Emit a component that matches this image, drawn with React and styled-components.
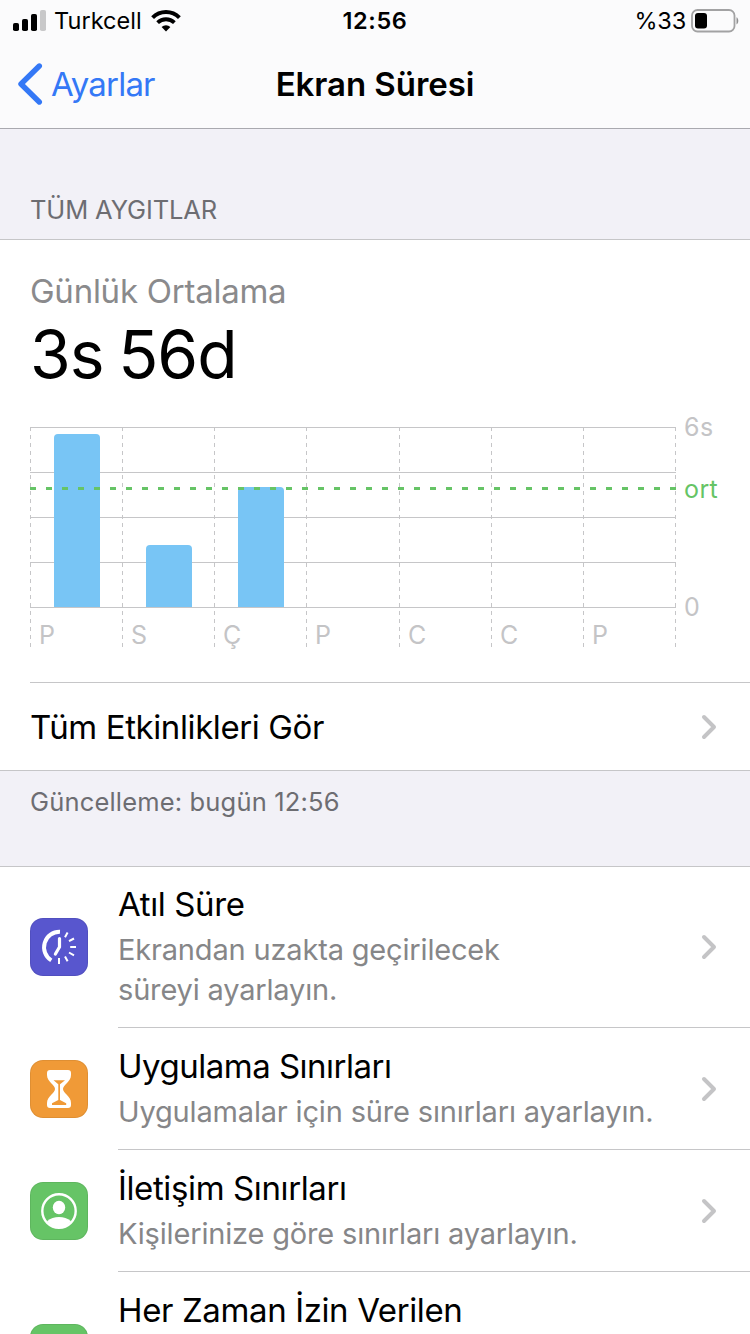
import React from 'react';
import styled, { createGlobalStyle } from 'styled-components';

const GlobalStyle = createGlobalStyle`
  * {
    box-sizing: border-box;
  }
  body {
    margin: 0;
    background-color: #f2f1f7;
    font-family: Inter, 'Liberation Sans', sans-serif;
    color: #000;
  }
`;

const Screen = styled.div`
  display: flex;
  flex-direction: column;
  width: 750px;
  height: 1334px;
  overflow: hidden;
  background-color: #f2f1f7;
  white-space: nowrap;
`;

const Header = styled.header`
  flex: none;
  height: 129px;
  background-color: #fbfbfc;
  border-bottom: 1px solid #a9a9af;
`;

const StatusBar = styled.div`
  display: grid;
  grid-template-columns: 1fr auto 1fr;
  align-items: center;
  height: 40px;
  padding: 0 11px 0 13px;
  font-size: 23.5px;
  line-height: 40px;
`;

const StatusGroup = styled.div`
  display: flex;
  align-items: center;
  justify-content: ${(props) => (props.$end ? 'flex-end' : 'flex-start')};
`;

const Carrier = styled.span`
  margin: 1px 9px 0 8px;
  letter-spacing: 0.05px;
`;

const Clock = styled.span`
  padding: 1px 2px 0 0;
  font-weight: 600;
  letter-spacing: 0.6px;
`;

const BatteryText = styled.span`
  margin: 1px 5px 0 0;
  letter-spacing: -0.2px;
`;

const NavBar = styled.nav`
  display: grid;
  grid-template-columns: 1fr auto 1fr;
  align-items: center;
  height: 88px;
  padding: 0 17px;
  font-size: 33px;
  line-height: 88px;
`;

const BackButton = styled.a`
  display: flex;
  align-items: center;
  gap: 8px;
  color: #3478f6;
  letter-spacing: -0.8px;
`;

const Title = styled.span`
  font-weight: 600;
  letter-spacing: -0.05px;
`;

const SectionLabel = styled.div`
  flex: none;
  height: 110px;
  padding: 61px 30px 0;
  font-size: 25.5px;
  line-height: 40px;
  letter-spacing: -0.13px;
  color: #6d6d72;
`;

const Card = styled.section`
  flex: none;
  background-color: #fff;
  border-top: 1px solid #c6c6c8;
  border-bottom: 1px solid #c6c6c8;
`;

const Summary = styled.div`
  height: 187px;
  padding: 31px 30px 0;
`;

const SummaryLabel = styled.div`
  font-size: 33px;
  line-height: 40px;
  letter-spacing: -0.25px;
  color: #8a8a8c;
`;

const SummaryValue = styled.div`
  font-size: 66px;
  line-height: 86px;
  letter-spacing: -1px;
  word-spacing: -3px;
`;

const ChartSvg = styled.svg`
  display: block;
  overflow: visible;
`;

const ChartLabel = styled.text`
  font-size: 25px;
  letter-spacing: 0.4px;
  fill: ${(props) => props.$color || '#c4c4c6'};
`;

const LinkRow = styled.div`
  display: flex;
  align-items: center;
  justify-content: space-between;
  height: 88px;
  margin-left: 30px;
  padding-right: 33px;
  border-top: 1px solid #c6c6c8;
  font-size: 33px;
  letter-spacing: -0.4px;
`;

const Footnote = styled.div`
  flex: none;
  height: 95px;
  padding: 11px 30px 0;
  font-size: 25.5px;
  line-height: 40px;
  letter-spacing: 0.17px;
  color: #6d6d72;
`;

const Item = styled.div`
  display: flex;
  align-items: center;
  height: ${(props) => props.$height}px;
  padding-left: 30px;
`;

const ItemIcon = styled.div`
  flex: none;
  width: 58px;
  height: 58px;
  margin: 0 30px ${(props) => props.$lift || 0}px 0;
  border-radius: 13px;
  background-color: ${(props) => props.$color};
  box-shadow: inset 0 0 0 1px rgba(0, 0, 0, 0.07);
`;

const ItemBody = styled.div`
  flex: 1;
  display: flex;
  align-items: center;
  justify-content: space-between;
  height: 100%;
  padding-right: 33px;
  border-bottom: 1px solid #c6c6c8;
`;

const ItemText = styled.div`
  align-self: flex-start;
  padding-top: ${(props) => 15 - (props.$lift || 0)}px;
`;

const ItemTitle = styled.div`
  font-size: 33px;
  line-height: 46px;
  letter-spacing: ${(props) => props.$spacing || -0.38}px;
`;

const ItemDescription = styled.div`
  margin-top: 3px;
  font-size: 29px;
  line-height: 40px;
  letter-spacing: -0.17px;
  color: #868688;
  white-space: pre-line;
`;

const Chevron = () => (
  <svg width="16" height="26" viewBox="0 0 16 26" fill="none">
    <path d="M3 3l10 10L3 23" stroke="#c4c4c6" strokeWidth="4" strokeLinecap="round" strokeLinejoin="round" />
  </svg>
);

const BackArrow = () => (
  <svg width="26" height="44" viewBox="0 0 26 44" fill="none">
    <path d="M22.3 4L4 22l18.3 18" stroke="#3478f6" strokeWidth="5.4" strokeLinecap="round" strokeLinejoin="round" />
  </svg>
);

const Signal = () => (
  <svg width="33" height="21" viewBox="0 0 33 21">
    <rect x="0" y="13" width="6" height="8" rx="1.8" />
    <rect x="9" y="9" width="6" height="12" rx="1.8" />
    <rect x="18" y="4" width="6" height="17" rx="1.8" />
    <rect x="27" y="0" width="6" height="21" rx="1.8" fill="#c8c8c9" />
  </svg>
);

const Wifi = () => (
  <svg width="30" height="22" viewBox="0 0 30 22" fill="none" stroke="#000">
    <path d="M1.6 7.6A19 19 0 0 1 28.4 7.6" strokeWidth="4" />
    <path d="M6.6 12.7A12 12 0 0 1 23.4 12.7" strokeWidth="3.8" />
    <path d="M15 21.5l-4.4-4.4a6.4 6.4 0 0 1 8.8 0z" fill="#000" stroke="none" />
  </svg>
);

const Battery = () => (
  <svg width="48" height="24" viewBox="0 0 48 24">
    <rect x="1" y="1" width="42.5" height="21.5" rx="5.5" fill="none" stroke="#a2a2a3" strokeWidth="1.8" />
    <rect x="4" y="4" width="12" height="15.5" rx="3" />
    <path d="M45.5 8.2c2.4 1.2 2.4 6 0 7.2z" fill="#8f8f90" />
  </svg>
);

const DowntimeIcon = () => (
  <svg width="58" height="58" viewBox="0 0 58 58" fill="none" stroke="#fff">
    <path d="M30 13.8A15.5 15.5 0 0 0 21.3 42.4" strokeWidth="4" />
    <path d="M29.5 20.500v8.500L25.4 36" strokeWidth="3.2" strokeLinecap="round" strokeLinejoin="round" />
    <path
      d="M35 19.3l2.6-4.7M39 23.2l5-2.7M40.2 29H46M39 34.5l5 2.8M35 38.6l2.6 4.7M29 40v6"
      strokeWidth="2"
    />
  </svg>
);

const HourglassIcon = () => (
  <svg width="58" height="58" viewBox="0 0 58 58">
    <path
      fill="#fff"
      d="M20 10h18q3 0 3 3v2c0 7-8 9.500-8 14s8 7 8 14v2q0 3-3 3H20q-3 0-3-3v-2c0-7 8-9.500 8-14s-8-7-8-14v-2q0-3 3-3z"
    />
    <path fill="#f09a37" d="M23.500 20.300h11.500l-5 4v15.700l6.200 3.200v1.800H22v-1.800l6.300-3.200V24.300z" />
  </svg>
);

const PersonIcon = () => (
  <svg width="58" height="58" viewBox="0 0 58 58">
    <circle cx="29" cy="29" r="16.7" fill="none" stroke="#fff" strokeWidth="2.4" />
    <ellipse cx="29" cy="25.500" rx="6.200" ry="6.700" fill="#fff" />
    <path fill="#fff" d="M17 39.200c3.500-3 7.500-4.200 12-4.200s8.500 1.200 12 4.200c-3 4.200-7 6.500-12 6.500s-9-2.300-12-6.500z" />
  </svg>
);

const columns = [30, 122, 214, 306, 399, 491, 583, 675];
const days = ['P', 'S', 'Ç', 'P', 'C', 'C', 'P'];
const bars = [173, 62, 120];

const roundedBar = (x, h) =>
  `M${x} 180v-${h - 4}q0-4 4-4h38q4 0 4 4v${h - 4}z`;

const UsageChart = () => (
  <ChartSvg width="750" height="255" viewBox="0 0 750 255">
    {[0, 45, 90, 135, 180].map((y) => (
      <rect key={y} x="30" y={y} width="646" height="1" fill="#c6c6c8" />
    ))}
    {columns.map((x) => (
      <path key={x} d={`M${x + 0.5} 0V220`} stroke="#c6c6c8" strokeDasharray="4 4" />
    ))}
    {bars.map((h, i) => (
      <path key={i} d={roundedBar(columns[i] + 24, h)} fill="#78c5f5" />
    ))}
    <path d="M30 61.5H676" stroke="#66c466" strokeWidth="3" strokeDasharray="6 10" />
    {days.map((day, i) => (
      <ChartLabel key={i} x={columns[i] + 9} y="217">{day}</ChartLabel>
    ))}
    <ChartLabel x="684" y="9">6s</ChartLabel>
    <ChartLabel x="684" y="71" $color="#66c466">ort</ChartLabel>
    <ChartLabel x="684" y="189">0</ChartLabel>
  </ChartSvg>
);

const items = [
  {
    title: 'Atıl Süre',
    description: 'Ekrandan uzakta geçirilecek\nsüreyi ayarlayın.',
    color: '#5856ce',
    icon: <DowntimeIcon />,
    height: 161,
    lift: 1,
  },
  {
    title: 'Uygulama Sınırları',
    description: 'Uygulamalar için süre sınırları ayarlayın.',
    color: '#f09a37',
    icon: <HourglassIcon />,
    height: 122,
    spacing: -0.5,
  },
  {
    title: 'İletişim Sınırları',
    description: 'Kişilerinize göre sınırları ayarlayın.',
    color: '#66c466',
    icon: <PersonIcon />,
    height: 122,
  },
  {
    title: 'Her Zaman İzin Verilen',
    color: '#66c466',
    height: 162,
  },
];

const App = () => {
  return (
    <Screen>
      <GlobalStyle />
      <Header>
        <StatusBar>
          <StatusGroup>
            <Signal />
            <Carrier>Turkcell</Carrier>
            <Wifi />
          </StatusGroup>
          <Clock>12:56</Clock>
          <StatusGroup $end>
            <BatteryText>%33</BatteryText>
            <Battery />
          </StatusGroup>
        </StatusBar>
        <NavBar>
          <BackButton>
            <BackArrow />
            Ayarlar
          </BackButton>
          <Title>Ekran Süresi</Title>
        </NavBar>
      </Header>
      <SectionLabel>TÜM AYGITLAR</SectionLabel>
      <Card>
        <Summary>
          <SummaryLabel>Günlük Ortalama</SummaryLabel>
          <SummaryValue>3s 56d</SummaryValue>
        </Summary>
        <UsageChart />
        <LinkRow>
          Tüm Etkinlikleri Gör
          <Chevron />
        </LinkRow>
      </Card>
      <Footnote>Güncelleme: bugün 12:56</Footnote>
      <Card>
        {items.map((item) => (
          <Item key={item.title} $height={item.height}>
            <ItemIcon $color={item.color} $lift={item.lift}>{item.icon}</ItemIcon>
            <ItemBody>
              <ItemText $lift={item.lift}>
                <ItemTitle $spacing={item.spacing}>{item.title}</ItemTitle>
                {item.description && <ItemDescription>{item.description}</ItemDescription>}
              </ItemText>
              {item.description && <Chevron />}
            </ItemBody>
          </Item>
        ))}
      </Card>
    </Screen>
  );
};

export default App;
